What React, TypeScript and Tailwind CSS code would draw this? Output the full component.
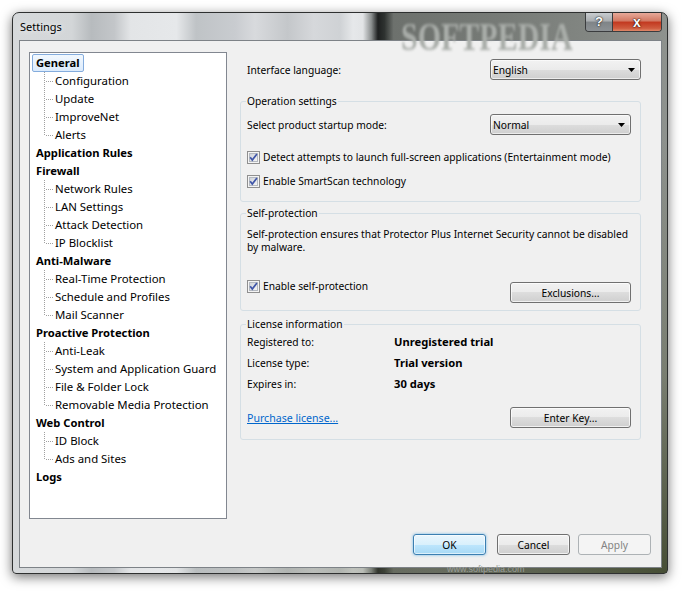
import React from "react";

type Node = { label: string; selected?: boolean; children: string[] };

const tree: Node[] = [
  { label: "General", selected: true, children: ["Configuration", "Update", "ImproveNet", "Alerts"] },
  { label: "Application Rules", children: [] },
  { label: "Firewall", children: ["Network Rules", "LAN Settings", "Attack Detection", "IP Blocklist"] },
  { label: "Anti-Malware", children: ["Real-Time Protection", "Schedule and Profiles", "Mail Scanner"] },
  {
    label: "Proactive Protection",
    children: ["Anti-Leak", "System and Application Guard", "File & Folder Lock", "Removable Media Protection"],
  },
  { label: "Web Control", children: ["ID Block", "Ads and Sites"] },
  { label: "Logs", children: [] },
];

function Connector({ last }: { last: boolean }) {
  return (
    <svg width="10" height="18" viewBox="0 0 10 18" className="shrink-0">
      <line x1="0.5" y1="0" x2="0.5" y2={last ? 10 : 18} stroke="#a0a0a0" strokeDasharray="1 1" />
      <line x1="2" y1="9.5" x2="10" y2="9.5" stroke="#a0a0a0" strokeDasharray="1 1" />
    </svg>
  );
}

function Tree() {
  return (
    <div className="h-[467px] w-[198px] shrink-0 border border-[#828790] bg-white pt-[1px] text-[11.4px]">
      {tree.map((n) => (
        <div key={n.label}>
          <div className="flex h-[18px] items-center pl-[2px]">
            {n.selected ? (
              <span className="flex h-[18px] items-center rounded-[2px] border border-[#84acdd] bg-[linear-gradient(#f2f8fe,#dcebfc)] px-[3px] text-[11.2px] font-bold">
                {n.label}
              </span>
            ) : (
              <span className="px-[4px] text-[11.2px] font-bold">{n.label}</span>
            )}
          </div>
          {n.children.map((c, i) => (
            <div key={c} className="ml-[14px] flex h-[18px] items-center">
              <Connector last={i === n.children.length - 1} />
              <span className="pl-[1px]">{c}</span>
            </div>
          ))}
        </div>
      ))}
    </div>
  );
}

function Combo({ value, className }: { value: string; className: string }) {
  return (
    <div
      className={
        "flex h-[21px] items-center justify-between rounded-[3px] border border-[#707070] bg-[linear-gradient(#f2f2f2,#ebebeb_50%,#dddddd_50%,#cfcfcf)] pl-[2px] pr-[5px] shadow-[inset_0_0_0_1px_rgba(255,255,255,0.6)] " +
        className
      }
    >
      <span>{value}</span>
      <svg width="7" height="4" viewBox="0 0 7 4">
        <path d="M0 0h7L3.5 4z" fill="#000" />
      </svg>
    </div>
  );
}

function Check({ label }: { label: string }) {
  return (
    <div className="flex h-[16px] items-center whitespace-nowrap">
      <svg width="13" height="13" viewBox="0 0 13 13" className="shrink-0">
        <defs>
          <linearGradient id="cbg" x1="0" y1="0" x2="1" y2="1">
            <stop offset="0" stopColor="#cdd1d7" />
            <stop offset="1" stopColor="#f7f7f7" />
          </linearGradient>
        </defs>
        <rect x="0.5" y="0.5" width="12" height="12" fill="#f4f4f4" stroke="#8f8f8f" />
        <rect x="2.5" y="2.5" width="8" height="8" fill="url(#cbg)" stroke="#b4b9c0" />
        <path d="M3.2 6.3 L5.3 9 L9.9 3" fill="none" stroke="#3f55a8" strokeWidth="1.7" />
      </svg>
      <span className="pl-[3px]">{label}</span>
    </div>
  );
}

function Button({ label, className }: { label: string; className: string }) {
  return (
    <div
      className={
        "flex h-[21px] items-center justify-center rounded-[3px] border border-[#707070] bg-[linear-gradient(#f2f2f2,#ebebeb_50%,#dddddd_50%,#cfcfcf)] shadow-[inset_0_0_0_1px_rgba(255,255,255,0.7)] " +
        className
      }
    >
      {label}
    </div>
  );
}

export default function App() {
  return (
    <div className="h-[595px] w-[689px] overflow-hidden bg-white pl-[12px] pt-[12px] font-['Noto_Sans',sans-serif] text-[10.25px] leading-[14px] text-black">
      <div className="relative flex h-[562px] w-[656px] flex-col rounded-t-[7px] rounded-b-[4px] border border-[#2e3030] bg-[radial-gradient(ellipse_at_100%_100%,rgba(66,74,48,0.95),rgba(90,96,70,0.4)_25%,transparent_55%),linear-gradient(90deg,#d6d9db_0%,#d3d6d8_9%,#b7bbbe_12%,#c3c6c9_15.5%,#e3e5e7_18%,#e6e8ea_25%,#bfc3c6_28%,#c9ccd0_34%,#d8dadd_37%,#c4c7ca_42%,#d6d8db_46%,#cfd2d5_50%,#e6e8ea_52%,#e2e4e6_53.5%,#8a8e8e_54.8%,#1e2020_55.8%,#2e3230_56.8%,#6d716d_58.2%,#777b77_75%,#828682_88%,#8e928e_100%)] shadow-[0_3px_12px_rgba(0,0,0,0.55)]">
        <div className="pointer-events-none absolute left-[388px] top-[4px] origin-top scale-y-[1.3] font-['Liberation_Serif',serif] text-[30px] font-bold leading-[30px] text-[#a9ada9] blur-[1.2px]">
          SOFTPEDIA
        </div>
        <div className="relative flex h-[27px] items-start">
          <div className="flex h-full items-center pl-[7px] text-[11px] text-black [text-shadow:0_0_6px_rgba(255,255,255,0.9)]">
            Settings
          </div>
          <div className="ml-auto mr-[5px] flex h-[19px] overflow-hidden rounded-b-[4px] border border-t-0 border-[#3a3c3e]">
            <div className="flex w-[27px] items-center justify-center border-r border-[#3a3c3e] bg-[linear-gradient(#c8cccf,#a9adb0_45%,#7f8487_50%,#8c9194)] font-['Liberation_Sans',sans-serif] text-[13px] font-bold text-white [text-shadow:0_0_2px_#222,0_0_1px_#000]">
              ?
            </div>
            <div className="flex w-[48px] items-center justify-center bg-[linear-gradient(#e7a999,#d27862_45%,#c2381f_50%,#cf5c3f_85%,#e08a6a)] font-['Liberation_Sans',sans-serif] text-[14px] font-bold text-white [text-shadow:0_0_2px_#3a0a00,0_0_1px_#000]">
              x
            </div>
          </div>
        </div>
        <div className="ml-[6px] flex h-[528px] w-[643px] flex-col border border-[#7d8287] bg-[#f0f0f0] pl-[9px] pr-[10px] pt-[11px]">
          <div className="flex items-start gap-[13px]">
            <Tree />
            <div className="flex w-[401px] flex-col pt-[7px]">
              <div className="flex h-[21px] items-center justify-between pl-[7px]">
                <span>Interface language:</span>
                <Combo value="English" className="w-[151px]" />
              </div>

              <fieldset className="mt-[14px] rounded-[3px] border border-[#d5dfe5] px-[6px] pb-[12px]">
                <legend className="-ml-[1px] px-[1px] leading-[14px]">Operation settings</legend>
                <div className="mt-[6px] flex h-[21px] items-center justify-between">
                  <span>Select product startup mode:</span>
                  <Combo value="Normal" className="mr-[3px] w-[141px]" />
                </div>
                <div className="mt-[14px]">
                  <Check label="Detect attempts to launch full-screen applications (Entertainment mode)" />
                </div>
                <div className="mt-[8px]">
                  <Check label="Enable SmartScan technology" />
                </div>
              </fieldset>

              <fieldset className="mt-[4px] rounded-[3px] border border-[#d5dfe5] px-[6px] pb-[7px]">
                <legend className="-ml-[1px] px-[1px] leading-[14px]">Self-protection</legend>
                <p className="mt-[8px] whitespace-nowrap leading-[13px]">
                  Self-protection ensures that Protector Plus Internet Security cannot be disabled
                  <br />
                  by malware.
                </p>
                <div className="mt-[24px] flex items-start justify-between">
                  <Check label="Enable self-protection" />
                  <Button label="Exclusions..." className="mr-[3px] mt-[4px] w-[121px]" />
                </div>
              </fieldset>

              <fieldset className="mt-[6px] rounded-[3px] border border-[#d5dfe5] px-[6px] pb-[11px]">
                <legend className="-ml-[1px] px-[1px] leading-[14px]">License information</legend>
                <div className="mt-[3px] flex h-[16px] items-center">
                  <span className="w-[147px]">Registered to:</span>
                  <span className="text-[11.2px] font-bold">Unregistered trial</span>
                </div>
                <div className="mt-[5px] flex h-[16px] items-center">
                  <span className="w-[147px]">License type:</span>
                  <span className="text-[11.2px] font-bold">Trial version</span>
                </div>
                <div className="mt-[5px] flex h-[16px] items-center">
                  <span className="w-[147px]">Expires in:</span>
                  <span className="text-[11.2px] font-bold">30 days</span>
                </div>
                <div className="mt-[15px] flex h-[21px] items-center justify-between">
                  <span className="text-[10.6px] text-[#0066cc] underline">Purchase license...</span>
                  <Button label="Enter Key..." className="mr-[3px] w-[121px]" />
                </div>
              </fieldset>
            </div>
          </div>

          <div className="mt-[15px] flex justify-end">
            <div className="flex h-[21px] w-[73px] items-center justify-center rounded-[3px] border border-[#3c7fb1] bg-[linear-gradient(#eaf6fd,#d9f0fc_50%,#bee6fd_50%,#a7d9f5)] shadow-[0_0_3px_rgba(80,170,230,0.8),inset_0_0_0_1px_rgba(255,255,255,0.6)]">
              OK
            </div>
            <Button label="Cancel" className="ml-[11px] w-[73px]" />
            <div className="ml-[8px] flex h-[21px] w-[73px] items-center justify-center rounded-[3px] border border-[#adb2b5] bg-[#f4f4f4] text-[#838383]">
              Apply
            </div>
          </div>
        </div>
        <div className="pointer-events-none absolute left-[434px] top-[552px] font-['Liberation_Sans',sans-serif] text-[9px] leading-[9px] text-[#9a9e9a]">
          www.softpedia.com
        </div>
      </div>
    </div>
  );
}
